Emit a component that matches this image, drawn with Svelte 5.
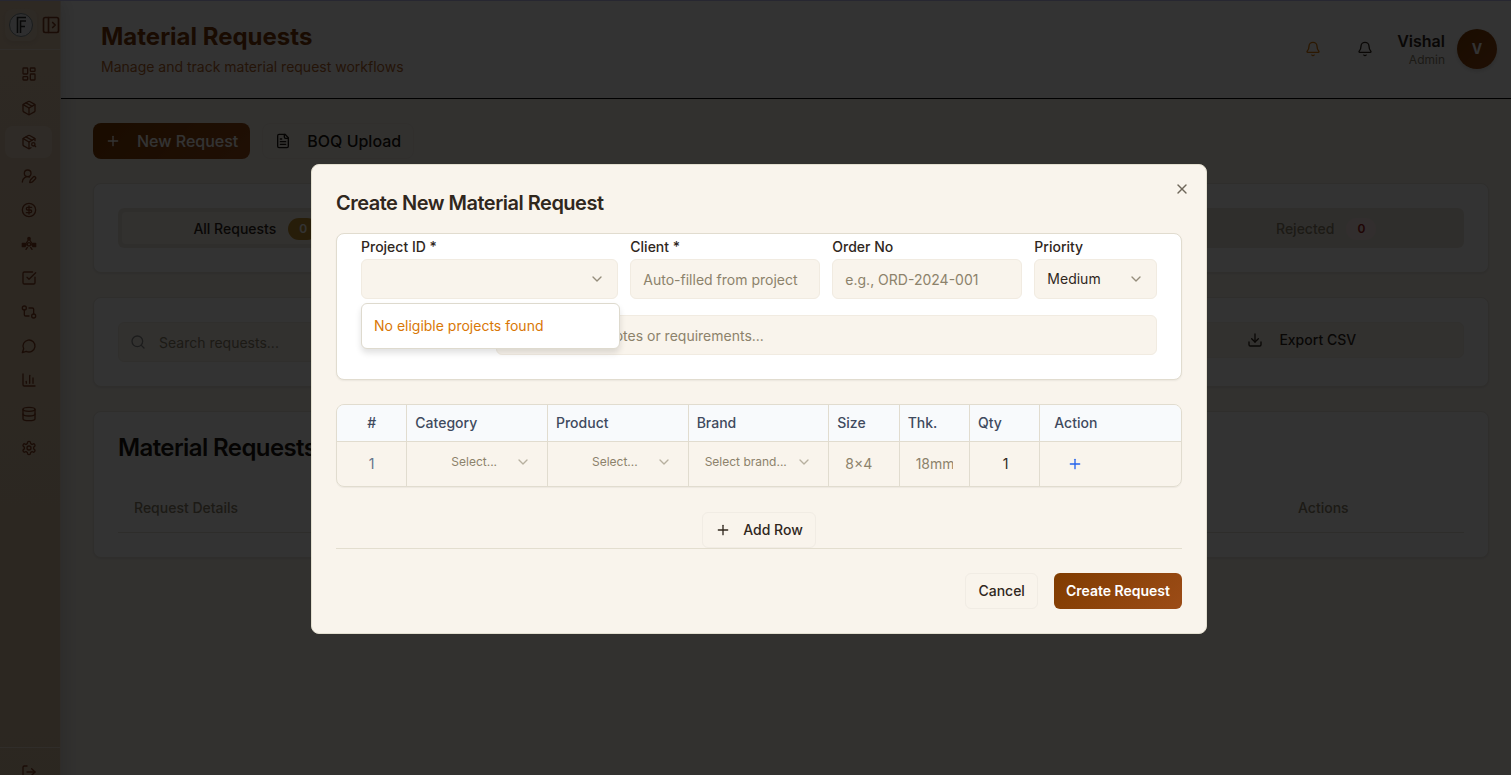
<script>
  const nav = [
    { id: 'dashboard', label: 'Dashboard', body: '<rect width="7" height="9" x="3" y="3" rx="1"/><rect width="7" height="5" x="14" y="3" rx="1"/><rect width="7" height="9" x="14" y="12" rx="1"/><rect width="7" height="5" x="3" y="16" rx="1"/>' },
    { id: 'products', label: 'Products', body: '<path d="M11 21.73a2 2 0 0 0 2 0l7-4A2 2 0 0 0 21 16V8a2 2 0 0 0-1-1.73l-7-4a2 2 0 0 0-2 0l-7 4A2 2 0 0 0 3 8v8a2 2 0 0 0 1 1.73z"/><path d="M12 22V12"/><path d="m3.3 7 8.7 5 8.7-5"/><path d="m7.5 4.27 9 5.15"/>' },
    { id: 'requests', label: 'Material requests', active: true, body: '<path d="M21 10V8a2 2 0 0 0-1-1.73l-7-4a2 2 0 0 0-2 0l-7 4A2 2 0 0 0 3 8v8a2 2 0 0 0 1 1.73l7 4a2 2 0 0 0 2 0l2-1.14"/><path d="m7.5 4.27 9 5.15"/><path d="M3.29 7 12 12l8.71-5"/><path d="M12 22V12"/><circle cx="18.5" cy="15.5" r="2.5"/><path d="M20.27 17.27 22 19"/>' },
    { id: 'clients', label: 'Clients', body: '<path d="M2 21a8 8 0 0 1 10.821-7.487"/><path d="M21.378 16.626a1 1 0 0 0-3.004-3.004l-4.01 4.012a2 2 0 0 0-.506.854l-.837 2.87a.5.5 0 0 0 .62.62l2.87-.837a2 2 0 0 0 .854-.506z"/><circle cx="10" cy="8" r="5"/>' },
    { id: 'finance', label: 'Finance', body: '<circle cx="12" cy="12" r="10"/><path d="M16 8h-6a2 2 0 1 0 0 4h4a2 2 0 1 1 0 4H8"/><path d="M12 18V6"/>' },
    { id: 'operations', label: 'Operations', body: '<circle fill="currentColor" cx="12" cy="4" r="1.800"/><path d="M11 6 7 12M13 6l4 6"/><circle cx="12" cy="12.500" r="2.500"/><path fill="currentColor" d="M2 11h4l2 2-2 3H2zM22 11h-4l-2 2 2 3h4z"/><path d="m9.500 17-2 3M14.500 17l2 3"/>' },
    { id: 'tasks', label: 'Tasks', body: '<path d="M21 10.656V19a2 2 0 0 1-2 2H5a2 2 0 0 1-2-2V5a2 2 0 0 1 2-2h12.344"/><path d="m9 11 3 3L22 4"/>' },
    { id: 'workflow', label: 'Workflow', body: '<circle cx="5" cy="6" r="3"/><path d="M12 6h5a2 2 0 0 1 2 2v7"/><circle cx="19" cy="18" r="3"/><path d="M12 18H7a2 2 0 0 1-2-2V9"/>' },
    { id: 'chat', label: 'Chat', body: '<path d="M7.900 20A9 9 0 1 0 4 16.100L2 22Z"/>' },
    { id: 'reports', label: 'Reports', body: '<path d="M3 3v16a2 2 0 0 0 2 2h16"/><path d="M18 17V9"/><path d="M13 17V5"/><path d="M8 17v-3"/>' },
    { id: 'stock', label: 'Stock', body: '<ellipse cx="12" cy="5" rx="9" ry="3"/><path d="M3 5v14a9 3 0 0 0 18 0V5"/><path d="M3 12a9 3 0 0 0 18 0"/>' },
    { id: 'settings', label: 'Settings', body: '<path d="M12.220 2h-.44a2 2 0 0 0-2 2v.18a2 2 0 0 1-1 1.730l-.43.25a2 2 0 0 1-2 0l-.15-.08a2 2 0 0 0-2.730.73l-.22.38a2 2 0 0 0 .73 2.730l.15.1a2 2 0 0 1 1 1.720v.51a2 2 0 0 1-1 1.740l-.15.09a2 2 0 0 0-.73 2.730l.22.38a2 2 0 0 0 2.730.73l.15-.08a2 2 0 0 1 2 0l.43.25a2 2 0 0 1 1 1.730V20a2 2 0 0 0 2 2h.44a2 2 0 0 0 2-2v-.18a2 2 0 0 1 1-1.730l.43-.25a2 2 0 0 1 2 0l.15.08a2 2 0 0 0 2.730-.73l.22-.39a2 2 0 0 0-.73-2.730l-.15-.08a2 2 0 0 1-1-1.740v-.5a2 2 0 0 1 1-1.740l.15-.09a2 2 0 0 0 .73-2.730l-.22-.38a2 2 0 0 0-2.730-.73l-.15.08a2 2 0 0 1-2 0l-.43-.25a2 2 0 0 1-1-1.730V4a2 2 0 0 0-2-2z"/><circle cx="12" cy="12" r="3"/>' }
  ];
  const bell = '<path d="M10.268 21a2 2 0 0 0 3.464 0"/><path d="M3.262 15.326A1 1 0 0 0 4 17h16a1 1 0 0 0 .74-1.673C19.410 13.956 18 12.499 18 8A6 6 0 0 0 6 8c0 4.499-1.411 5.956-2.738 7.326"/>';
  const plus = '<path d="M5 12h14"/><path d="M12 5v14"/>';
  const chevron = '<path d="m6 9 6 6 6-6"/>';
</script>

{#snippet icon(body, size = 16)}
  <svg class="icon" width={size} height={size} viewBox="0 0 24 24" aria-hidden="true">{@html body}</svg>
{/snippet}

<div class="app">
  <aside class="sidebar">
    <div class="brand">
      <span class="logo">
        <svg width="24" height="24" viewBox="0 0 24 24" aria-hidden="true">
          <circle cx="12" cy="12" r="11.500" fill="#e4e6e8" stroke="#7d8a8e" />
          <path d="M8.500 20V4.500H17M11.500 20V8H17M11.500 13.500H16" fill="none" stroke="#2c2c2c" stroke-width="1.600" />
        </svg>
      </span>
      <button class="bare" aria-label="Expand sidebar">
        {@render icon('<rect width="18" height="18" x="3" y="3" rx="2"/><path d="M9 3v18"/><path d="m14 9 3 3-3 3"/>', 20)}
      </button>
    </div>
    <nav>
      {#each nav as item (item.id)}
        <a href="#{item.id}" class:active={item.active} aria-label={item.label}>{@render icon(item.body)}</a>
      {/each}
    </nav>
    <div class="signout">
      <button class="bare" aria-label="Sign out">
        {@render icon('<path d="M9 21H5a2 2 0 0 1-2-2V5a2 2 0 0 1 2-2h4"/><path d="m16 17 5-5-5-5"/><path d="M21 12H9"/>')}
      </button>
    </div>
  </aside>

  <div class="page">
    <header>
      <div class="heading">
        <h1>Material Requests</h1>
        <p>Manage and track material request workflows</p>
      </div>
      <div class="account">
        <button class="bare alert" aria-label="Alerts">{@render icon(bell)}</button>
        <button class="bare notice" aria-label="Notifications">{@render icon(bell)}</button>
        <div class="who"><strong>Vishal</strong><span>Admin</span></div>
        <span class="avatar">V</span>
      </div>
    </header>

    <main>
      <div class="actions">
        <button class="large primary">{@render icon(plus)}New Request</button>
        <button class="large outline">{@render icon('<path d="M15 2H6a2 2 0 0 0-2 2v16a2 2 0 0 0 2 2h12a2 2 0 0 0 2-2V7Z"/><path d="M14 2v4a2 2 0 0 0 2 2h4"/><path d="M10 9H8"/><path d="M16 13H8"/><path d="M16 17H8"/>')}BOQ Upload</button>
      </div>

      <section class="card">
        <div class="tabs" role="tablist">
          <button class="tab selected" role="tab" aria-selected="true">All Requests <span class="badge gold">0</span></button>
          <button class="tab last" role="tab" aria-selected="false">Rejected <span class="badge red">0</span></button>
        </div>
      </section>

      <section class="card filters">
        <div class="search">
          {@render icon('<circle cx="11" cy="11" r="8"/><path d="m21 21-4.300-4.300"/>')}
          <input type="search" aria-label="Search requests" placeholder="Search requests..." />
        </div>
        <button class="export">{@render icon('<path d="M21 15v4a2 2 0 0 1-2 2H5a2 2 0 0 1-2-2v-4"/><path d="m7 10 5 5 5-5"/><path d="M12 15V3"/>')}Export CSV</button>
      </section>

      <section class="card list">
        <h2>Material Requests</h2>
        <table>
          <thead>
            <tr><th>Request Details</th><th class="end">Actions</th></tr>
          </thead>
        </table>
      </section>
    </main>
  </div>
</div>

<div class="overlay">
  <div class="modal" role="dialog" aria-modal="true" aria-labelledby="modal-title">
    <button class="bare close" aria-label="Close">{@render icon('<path d="M18 6 6 18"/><path d="m6 6 12 12"/>')}</button>
    <h2 id="modal-title">Create New Material Request</h2>

    <div class="form">
      <div class="field wide">
        <label for="project">Project ID *</label>
        <div class="picker">
          <select id="project"><option></option></select>
          {@render icon(chevron)}
          <div class="menu">No eligible projects found</div>
        </div>
      </div>
      <div class="field">
        <label for="client">Client *</label>
        <input id="client" placeholder="Auto-filled from project" />
      </div>
      <div class="field">
        <label for="order">Order No</label>
        <input id="order" placeholder="e.g., ORD-2024-001" />
      </div>
      <div class="field narrow">
        <label for="priority">Priority</label>
        <div class="picker">
          <select id="priority"><option>Medium</option></select>
          {@render icon(chevron)}
        </div>
      </div>
      <input class="notes" aria-label="Notes" placeholder="Any additional notes or requirements..." />
    </div>

    <div class="items">
      <table>
        <colgroup>
          <col /><col class="two" /><col class="two" /><col class="two" /><col /><col /><col /><col class="two" />
        </colgroup>
        <thead>
          <tr><th class="mid">#</th><th>Category</th><th>Product</th><th>Brand</th><th>Size</th><th>Thk.</th><th>Qty</th><th class="act">Action</th></tr>
        </thead>
        <tbody>
          <tr>
            <td class="mid num">1</td>
            <td><div class="picker small indent"><select aria-label="Category"><option>Select...</option></select>{@render icon(chevron)}</div></td>
            <td><div class="picker small indent"><select aria-label="Product"><option>Select...</option></select>{@render icon(chevron)}</div></td>
            <td><div class="picker small"><select aria-label="Brand"><option>Select brand...</option></select>{@render icon(chevron)}</div></td>
            <td><input aria-label="Size" placeholder="8×4" /></td>
            <td><input aria-label="Thickness" placeholder="18mm" /></td>
            <td><input class="qty" aria-label="Quantity" value="1" /></td>
            <td><button class="bare add" aria-label="Add item">{@render icon(plus)}</button></td>
          </tr>
        </tbody>
      </table>
    </div>

    <button class="medium addrow">{@render icon(plus)}Add Row</button>

    <footer>
      <button class="medium">Cancel</button>
      <button class="medium primary create">Create Request</button>
    </footer>
  </div>
</div>

<style>
  :global(body) {
    overflow: hidden;
  }
  .app,
  .overlay {
    box-sizing: border-box;
    font-family: Inter, sans-serif;
    font-size: 14px;
    line-height: 20px;
    color: #30271d;
  }
  .app :is(div, header, main, aside, section, a, button, input),
  .overlay :is(div, button, input, select, td, th) {
    box-sizing: border-box;
  }
  h1, h2, p {
    margin: 0;
  }
  button, input, select {
    font: inherit;
    color: inherit;
  }
  button {
    display: flex;
    align-items: center;
    justify-content: center;
    white-space: nowrap;
    font-weight: 500;
    cursor: pointer;
  }
  .icon {
    flex: none;
    fill: none;
    stroke: currentColor;
    stroke-width: 2;
    stroke-linecap: round;
    stroke-linejoin: round;
  }
  .bare {
    padding: 0;
    border: 0;
    background: none;
  }

  .app {
    display: flex;
    height: 100vh;
    overflow: hidden;
    border-top: 1px solid #c4c4f4;
    background: #f9f4ec;
  }
  .sidebar {
    display: flex;
    flex-direction: column;
    flex: none;
    z-index: 1;
    width: 61px;
    height: calc(100% + 22px);
    border-right: 1px solid #e8dccb;
    background: linear-gradient(#e4cbb0, #d8c0a2);
    box-shadow: 4px 0 16px rgba(0, 0, 0, 0.12);
    color: #843f20;
  }
  .brand {
    display: flex;
    align-items: center;
    gap: 4px;
    height: 49px;
    padding-left: 5px;
    border-bottom: 1px solid #eee0cf;
  }
  .brand button {
    flex: none;
  }
  .logo {
    display: grid;
    place-items: center;
    flex: none;
    width: 32px;
    height: 32px;
    border-radius: 8px;
    background: rgba(255, 255, 255, 0.1);
    box-shadow: 0 2px 4px rgba(0, 0, 0, 0.06);
  }
  nav {
    display: flex;
    flex-direction: column;
    gap: 2px;
    padding: 8px 8px 0 5px;
  }
  nav a {
    display: grid;
    place-items: center;
    height: 32px;
    border-radius: 8px;
    color: inherit;
  }
  nav a.active {
    background: rgba(255, 255, 255, 0.28);
  }
  .signout {
    margin-top: auto;
    padding: 8px 8px 9px 5px;
    border-top: 1px solid #eee0cf;
  }
  .signout button {
    width: 100%;
    height: 32px;
  }

  .page {
    flex: 1;
    min-width: 0;
  }
  header {
    display: flex;
    justify-content: space-between;
    align-items: center;
    height: 98px;
    padding: 0 14px 2px 40px;
    border-bottom: 1px solid #000;
    background: #fff;
  }
  h1 {
    font-size: 24px;
    line-height: 32px;
    font-weight: 700;
    color: #7c3a08;
  }
  .heading p {
    margin-top: 4px;
    line-height: 20px;
    color: #b5652b;
  }
  .account {
    display: flex;
    align-items: center;
  }
  .alert {
    margin-right: 36px;
    color: #d97706;
  }
  .notice {
    margin-right: 24px;
  }
  .who {
    display: flex;
    flex-direction: column;
    align-items: flex-end;
    margin-right: 12px;
    padding-top: 2px;
  }
  .who strong {
    font-size: 16px;
    line-height: 20px;
    font-weight: 600;
  }
  .who span {
    font-size: 12px;
    line-height: 18px;
    color: #8c826b;
  }
  .avatar {
    display: grid;
    place-items: center;
    width: 40px;
    height: 40px;
    border-radius: 50%;
    background: linear-gradient(135deg, #803c00, #9c4c17);
    box-shadow: 0 2px 4px rgba(0, 0, 0, 0.15);
    color: #fff;
    font-weight: 700;
  }

  main {
    display: flex;
    flex-direction: column;
    gap: 24px;
    padding: 24px 22px 24px 32px;
  }
  .actions {
    display: flex;
    gap: 12px;
  }
  .large {
    gap: 16px;
    height: 36px;
    padding: 0 12px;
    border: 0;
    border-radius: 8px;
    font-size: 16px;
  }
  .outline {
    border: 1px solid #f3ece2;
    background: none;
    color: #1d1812;
  }
  .primary {
    background: linear-gradient(135deg, #803c00, #9c4c17);
    color: #fff;
  }
  .card {
    padding: 24px;
    border: 1px solid #e9e5db;
    border-radius: 8px;
    background: #fff;
    box-shadow: 0 1px 2px rgba(0, 0, 0, 0.08);
  }
  .tabs {
    display: grid;
    grid-template-columns: repeat(5, 1fr);
    height: 40px;
    padding: 4px;
    border-radius: 6px;
    background: #ece7dd;
  }
  .tab {
    gap: 12px;
    padding: 2px 0 0;
    border: 0;
    border-radius: 4px;
    background: none;
    color: #8c826b;
  }
  .tab.selected {
    background: #f9f4ec;
    color: #30271d;
  }
  .tab.last {
    grid-column: 5;
  }
  .badge {
    padding: 1px 11px;
    border-radius: 11px;
    font-size: 12px;
    font-weight: 600;
  }
  .gold {
    background: #c1902f;
    color: #fff;
  }
  .red {
    background: #fbe3e3;
    color: #a01818;
  }
  .filters {
    display: grid;
    grid-template-columns: repeat(4, 1fr);
    align-items: start;
    gap: 16px;
  }
  .search {
    display: flex;
    align-items: center;
    gap: 13px;
    height: 40px;
    padding: 0 11px;
    border: 1px solid #f1ebe1;
    border-radius: 6px;
    background: #f9f4ec;
    color: #8c8c8c;
  }
  .search input {
    flex: 1;
    min-width: 0;
    padding: 2px 0 0;
    border: 0;
    background: none;
  }
  .export {
    grid-column: 4;
    gap: 16px;
    height: 36px;
    border: 1px solid #f3ede3;
    border-radius: 6px;
    background: #f9f4ec;
  }
  .list h2 {
    font-size: 24px;
    line-height: 24px;
    font-weight: 600;
    letter-spacing: -0.025em;
    color: #1d1812;
  }
  table {
    width: 100%;
    border-collapse: separate;
    border-spacing: 0;
  }
  .list table {
    margin-top: 24px;
  }
  .list th {
    height: 48px;
    padding: 0 16px;
    border-bottom: 1px solid #e5e0d5;
    font-weight: 500;
    text-align: left;
    color: #8c826b;
  }
  .list .end {
    width: 150px;
  }

  .overlay {
    position: fixed;
    inset: 0;
    z-index: 10;
    display: grid;
    place-items: center;
    padding: 23px 0 0 7px;
    background: rgba(0, 0, 0, 0.8);
  }
  .modal {
    position: relative;
    width: 100%;
    max-width: 896px;
    padding: 24px;
    border: 1px solid #e3dfd0;
    border-radius: 8px;
    background: #f9f4ec;
  }
  .close {
    position: absolute;
    top: 16px;
    right: 16px;
    color: #6f675a;
  }
  .modal h2 {
    font-size: 20px;
    line-height: 28px;
    font-weight: 600;
    letter-spacing: -0.025em;
  }
  .form {
    display: grid;
    grid-template-columns: repeat(12, 1fr);
    column-gap: 12px;
    row-gap: 16px;
    margin-top: 16px;
    padding: 3px 24px 24px;
    border: 1px solid #e1dccf;
    border-radius: 8px;
    background: #fff;
    box-shadow: 0 1px 2px rgba(0, 0, 0, 0.06);
  }
  .field {
    display: flex;
    flex-direction: column;
    gap: 2px;
    grid-column: span 3;
    min-width: 0;
  }
  .field.wide {
    grid-column: span 4;
  }
  .field.narrow {
    grid-column: span 2;
  }
  label {
    font-weight: 500;
  }
  .notes {
    grid-column: 3 / -1;
  }
  .form input,
  .form select {
    width: 100%;
    min-width: 0;
    height: 40px;
    padding: 0 12px;
    border: 1px solid #f1ebe1;
    border-radius: 6px;
    background: #f9f4ec;
  }
  input::placeholder {
    color: #8c826b;
    opacity: 1;
  }
  select {
    appearance: none;
  }
  .picker {
    position: relative;
    display: grid;
    align-items: center;
  }
  .picker select,
  .picker .icon {
    grid-area: 1 / 1;
  }
  .picker .icon {
    justify-self: end;
    margin-right: 13px;
    pointer-events: none;
    color: #958d7b;
  }
  .menu {
    position: absolute;
    top: 44px;
    left: 0;
    width: calc(100% + 2px);
    padding: 12px;
    border: 1px solid #dedace;
    border-radius: 6px;
    background: #fff;
    box-shadow: 0 4px 6px rgba(0, 0, 0, 0.12);
    color: #d97706;
  }

  .items {
    margin-top: 24px;
    overflow: hidden;
    border: 1px solid #e1dccf;
    border-radius: 8px;
    box-shadow: 0 1px 1px rgba(0, 0, 0, 0.05);
  }
  .items table {
    table-layout: fixed;
  }
  .items col {
    width: 8.333%;
  }
  .items col.two {
    width: 16.667%;
  }
  .items th {
    height: 37px;
    padding: 0 8px;
    border-bottom: 1px solid #e1dccf;
    background: #f8fafc;
    font-weight: 500;
    text-align: left;
    color: #3f4a5e;
  }
  .items :is(th, td):not(:last-child) {
    border-right: 1px solid #e1dccf;
  }
  .items .mid {
    text-align: center;
  }
  .items th.act {
    padding-left: 14px;
  }
  .items td {
    height: 44px;
    padding: 0;
  }
  .items .num {
    color: #64748b;
  }
  .items input {
    display: block;
    width: calc(100% - 32px);
    height: 40px;
    padding: 0 0 2px;
    margin-left: 16px;
    border: 0;
    background: none;
  }
  .items .qty {
    width: 100%;
    margin-left: 1px;
    text-align: center;
  }
  .small {
    padding-bottom: 4px;
  }
  .small select {
    width: 100%;
    height: 32px;
    padding: 0 0 0 16px;
    border: 0;
    background: none;
    font-size: 12px;
    color: #8c826b;
  }
  .small.indent select {
    padding-left: 44px;
  }
  .small .icon {
    margin-right: 16px;
    color: #b7b09f;
  }
  .add {
    margin-left: 27px;
    color: #2563eb;
  }

  .medium {
    height: 36px;
    padding: 0 12px;
    border: 1px solid #f1ece4;
    border-radius: 6px;
    background: none;
  }
  .addrow {
    gap: 12px;
    margin: 25px auto 0;
  }
  footer {
    display: flex;
    justify-content: flex-end;
    gap: 16px;
    padding-top: 24px;
    border-top: 1px solid #e3decf;
  }
  .create {
    border: 0;
    background: linear-gradient(135deg, #803c00, #9c4c17);
    font-weight: 600;
  }
</style>
